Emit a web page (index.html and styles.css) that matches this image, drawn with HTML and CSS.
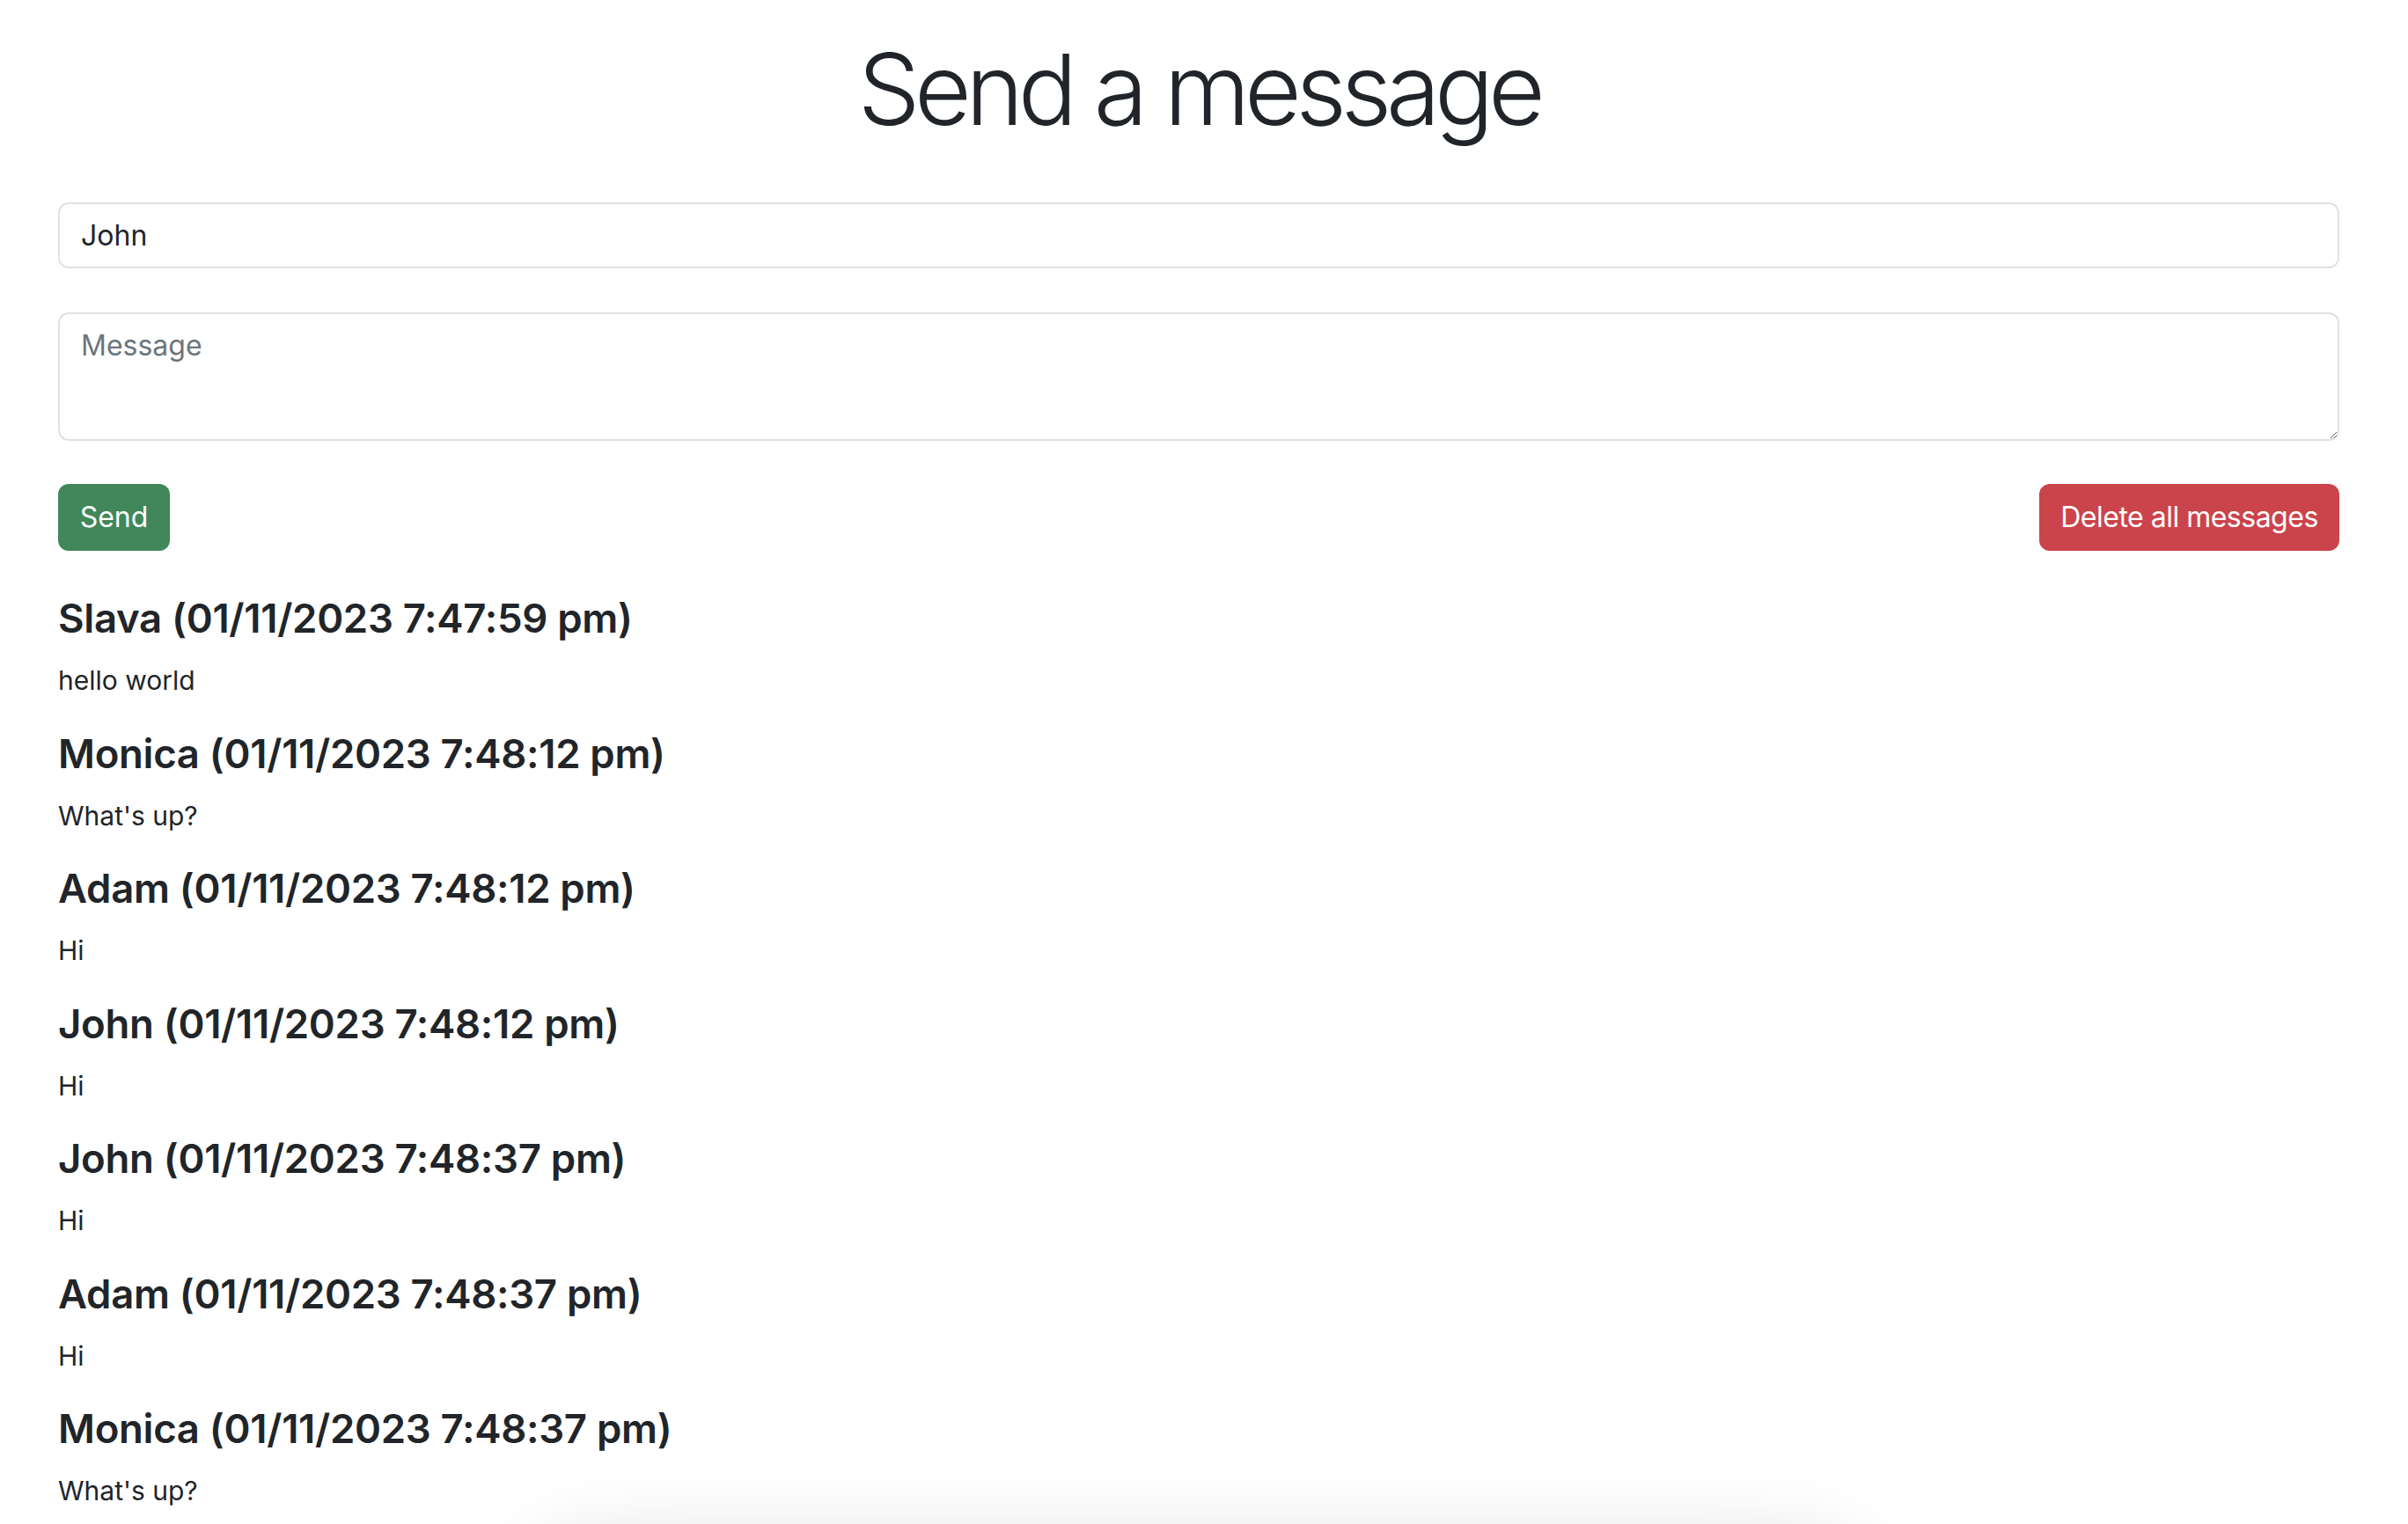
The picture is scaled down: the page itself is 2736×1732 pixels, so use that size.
FILE: index.html
```html
<!DOCTYPE html>
<html lang="en">
<head>
<meta charset="utf-8">
<title>Send a message</title>
<link rel="stylesheet" href="styles.css">
</head>
<body>
<main class="page">
  <h1 class="title">Send a message</h1>
  <form class="compose">
    <input class="field field-name" type="text" value="John">
    <textarea class="field field-message" placeholder="Message"></textarea>
    <div class="actions">
      <button type="button" class="btn btn-send">Send</button>
      <button type="button" class="btn btn-delete">Delete all messages</button>
    </div>
  </form>
  <section class="messages">
    <article class="message">
      <h5 class="message-head">Slava (01/11/2023 7:47:59 pm)</h5>
      <p class="message-body">hello world</p>
    </article>
    <article class="message">
      <h5 class="message-head">Monica (01/11/2023 7:48:12 pm)</h5>
      <p class="message-body">What's up?</p>
    </article>
    <article class="message">
      <h5 class="message-head">Adam (01/11/2023 7:48:12 pm)</h5>
      <p class="message-body">Hi</p>
    </article>
    <article class="message">
      <h5 class="message-head">John (01/11/2023 7:48:12 pm)</h5>
      <p class="message-body">Hi</p>
    </article>
    <article class="message">
      <h5 class="message-head">John (01/11/2023 7:48:37 pm)</h5>
      <p class="message-body">Hi</p>
    </article>
    <article class="message">
      <h5 class="message-head">Adam (01/11/2023 7:48:37 pm)</h5>
      <p class="message-body">Hi</p>
    </article>
    <article class="message">
      <h5 class="message-head">Monica (01/11/2023 7:48:37 pm)</h5>
      <p class="message-body">What's up?</p>
    </article>
  </section>
</main>
<div class="bottom-shadow"></div>
</body>
</html>
```
FILE: styles.css
```css
html, body {
  margin: 0;
  padding: 0;
  background: #ffffff;
}

body {
  font-family: Inter, "Noto Sans", "Liberation Sans", sans-serif;
  color: #212529;
  font-size: 32px;
  line-height: 1.5;
  overflow: hidden;
  height: 1732px;
}

.page {
  padding: 34px 78px 0 66px;
}

.title {
  margin: 0 0 62px 0;
  font-size: 112px;
  font-weight: 300;
  line-height: 134px;
  text-align: center;
  letter-spacing: -6.5px;
}

.compose {
  display: flex;
  flex-direction: column;
}

.field {
  display: block;
  box-sizing: border-box;
  width: 100%;
  margin: 0;
  border: 2px solid #dee2e6;
  border-radius: 12px;
  background: #fff;
  font-family: inherit;
  font-size: 32px;
  line-height: 48px;
  color: #212529;
  padding: 12px 24px;
  outline: none;
}

.field-name {
  height: 75px;
  margin-bottom: 50px;
}

.field-message {
  height: 146px;
  margin-bottom: 49px;
  resize: vertical;
}

.field-message::placeholder {
  color: #6c757d;
  opacity: 1;
}

.actions {
  display: flex;
  justify-content: space-between;
  align-items: center;
}

.btn {
  height: 76px;
  box-sizing: border-box;
  border: 0;
  border-radius: 12px;
  padding: 0 24px;
  font-family: inherit;
  font-size: 32px;
  color: #fff;
  line-height: 76px;
  white-space: nowrap;
}

.btn-send {
  background: #41875a;
  min-width: 127px;
}

.btn-delete {
  background: #cb444b;
  min-width: 341px;
  padding: 0 20px;
  letter-spacing: -0.5px;
}

.messages {
  margin-top: 53px;
}

.message-head {
  margin: 0 0 25px 0;
  font-size: 45.5px;
  font-weight: 600;
  line-height: 48px;
  letter-spacing: -0.3px;
}

.message-body {
  margin: 0 0 38.5px 0;
  font-size: 30px;
  line-height: 42px;
}

.bottom-shadow {
  position: fixed;
  left: 620px;
  width: 1480px;
  top: 1775px;
  height: 120px;
  border-radius: 60px;
  background: #fff;
  box-shadow: 0 0 90px 24px rgba(0, 0, 0, 0.13);
}
```
